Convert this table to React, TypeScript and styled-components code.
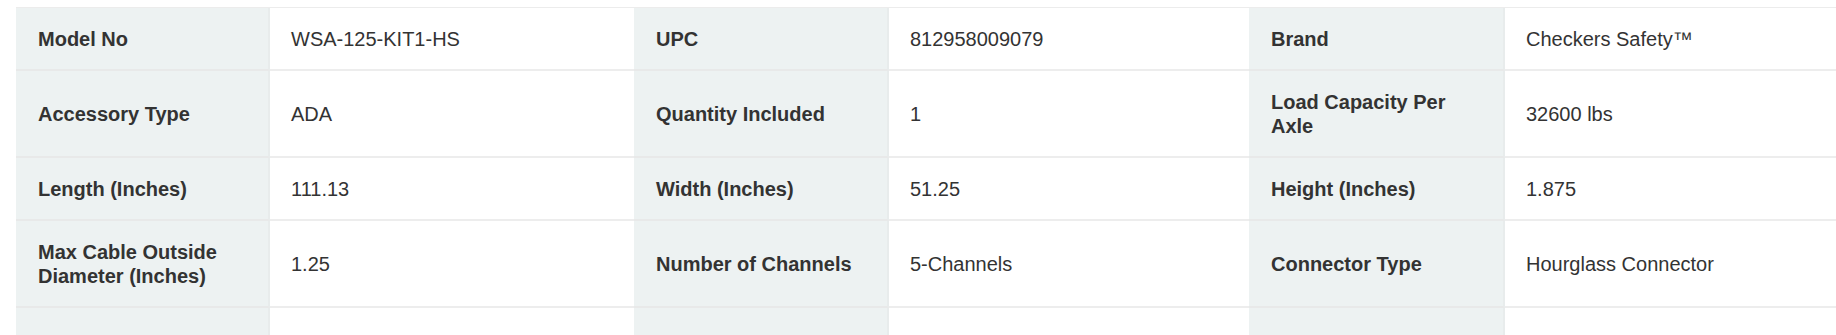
import React from "react";
import styled, { createGlobalStyle } from "styled-components";

const Global = createGlobalStyle`
  html, body { margin: 0; padding: 0; background: #fff; overflow: hidden; }
  body { font-family: "Liberation Sans", Arial, Helvetica, sans-serif; }
`;

const Page = styled.div`
  padding: 7px 0 0 16px;
  width: 1900px;
`;

const Table = styled.div`
  display: grid;
  grid-template-columns: 254px 364px 255px 360px 256px 380px;
  border-top: 1px solid #ececec;
  width: 1869px;
`;

const Label = styled.div`
  background: #edf2f2;
  border-right: 2px solid #e8ecec;
  border-bottom: 2px solid #e8e9e9;
  padding: 19px 18px 18px 22px;
  min-height: 24px;
  display: flex;
  align-items: center;
  font-weight: 700;
  font-size: 20px;
  line-height: 24px;
  color: #333;
`;

const Value = styled.div`
  background: #fff;
  border-bottom: 2px solid #ededed;
  padding: 19px 18px 18px 21px;
  min-height: 24px;
  display: flex;
  align-items: center;
  font-size: 20px;
  line-height: 24px;
  color: #333;
`;

const rows: [string, string][][] = [
  [
    ["Model No", "WSA-125-KIT1-HS"],
    ["UPC", "812958009079"],
    ["Brand", "Checkers Safety™"],
  ],
  [
    ["Accessory Type", "ADA"],
    ["Quantity Included", "1"],
    ["Load Capacity Per Axle", "32600 lbs"],
  ],
  [
    ["Length (Inches)", "111.13"],
    ["Width (Inches)", "51.25"],
    ["Height (Inches)", "1.875"],
  ],
  [
    ["Max Cable Outside Diameter (Inches)", "1.25"],
    ["Number of Channels", "5-Channels"],
    ["Connector Type", "Hourglass Connector"],
  ],
  [
    ["", ""],
    ["", ""],
    ["", ""],
  ],
];

export default function App() {
  return (
    <>
      <Global />
      <Page>
        <Table>
          {rows.map((row, ri) =>
            row.map(([l, v], ci) => (
              <React.Fragment key={`${ri}-${ci}`}>
                <Label>{l}</Label>
                <Value>{v}</Value>
              </React.Fragment>
            ))
          )}
        </Table>
      </Page>
    </>
  );
}
